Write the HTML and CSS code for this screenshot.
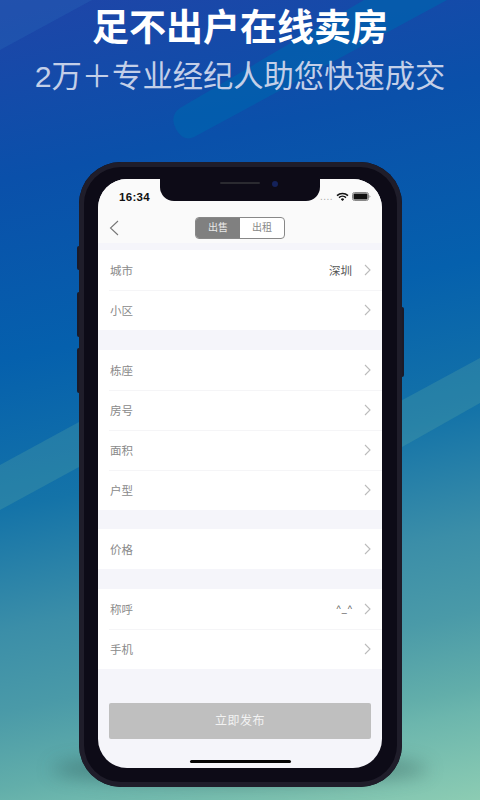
FILE: index.html
```html
<!DOCTYPE html>
<html lang="zh-CN">
<head>
    <meta charset="UTF-8">
    <title>足不出户在线卖房</title>
    <link rel="stylesheet" href="styles.css">
</head>
<body>
    <div class="poster">
        <svg class="bands" width="480" height="800" viewBox="0 0 480 800">
            <polygon points="0,50 92,0 0,0" fill="#2a6cb8" opacity="0.3"/>
            <path d="M180 108 L364 0 L447 0 L194 137 Q183 142 176 129 Q169 116 180 108 Z" fill="#0063ae" opacity="0.7"/>
            <polygon points="0,465 90,416 90,461 0,510" fill="#63b0a4" opacity="0.25"/>
            <polygon points="395,404 480,358 480,403 395,451" fill="#63b0a4" opacity="0.25"/>
        </svg>
        <div class="ground"></div>
        <h1 class="title">足不出户在线卖房</h1>
        <p class="subtitle">2万＋专业经纪人助您快速成交</p>

        <div class="phone">
            <span class="side-btn btn-mute"></span>
            <span class="side-btn btn-up"></span>
            <span class="side-btn btn-down"></span>
            <span class="side-btn btn-power"></span>
            <div class="screen">
                <div class="notch">
                    <span class="speaker"></span>
                    <span class="camera"></span>
                </div>
                <div class="status-bar">
                    <span class="time">16:34</span>
                    <div class="status-icons">
                        <span class="signal">....</span>
                        <svg width="13" height="10" viewBox="0 0 13 10">
                            <path d="M1 3.6 A8 8 0 0 1 12 3.6 M3 5.6 A5 5 0 0 1 10 5.6" fill="none" stroke="#111" stroke-width="1.5"/>
                            <path d="M4.8 7.2 A2.4 2.4 0 0 1 8.2 7.2 L6.5 9 Z" fill="#111"/>
                        </svg>
                        <svg width="19" height="9" viewBox="0 0 19 9">
                            <rect x="0.5" y="0.5" width="16" height="8" rx="2" fill="none" stroke="#888"/>
                            <rect x="1.5" y="1.5" width="14" height="6" rx="1" fill="#111"/>
                            <path d="M17.5 3 L18.5 4.5 L17.5 6 Z" fill="#888"/>
                        </svg>
                    </div>
                </div>
                <div class="nav-bar">
                    <svg class="back" width="10" height="16" viewBox="0 0 10 16">
                        <path d="M9 1 L1.5 8 L9 15" fill="none" stroke="#777" stroke-width="1.1"/>
                    </svg>
                    <div class="segment">
                        <span class="segment-item active">出售</span>
                        <span class="segment-item">出租</span>
                    </div>
                </div>

                <div class="group first">
                    <div class="row"><span class="label">城市</span><span class="value">深圳</span><svg class="arrow" width="7" height="12" viewBox="0 0 7 12"><path d="M1 1 L6 6 L1 11"/></svg></div>
                    <div class="row"><span class="label">小区</span><svg class="arrow" width="7" height="12" viewBox="0 0 7 12"><path d="M1 1 L6 6 L1 11"/></svg></div>
                </div>
                <div class="group">
                    <div class="row"><span class="label">栋座</span><svg class="arrow" width="7" height="12" viewBox="0 0 7 12"><path d="M1 1 L6 6 L1 11"/></svg></div>
                    <div class="row"><span class="label">房号</span><svg class="arrow" width="7" height="12" viewBox="0 0 7 12"><path d="M1 1 L6 6 L1 11"/></svg></div>
                    <div class="row"><span class="label">面积</span><svg class="arrow" width="7" height="12" viewBox="0 0 7 12"><path d="M1 1 L6 6 L1 11"/></svg></div>
                    <div class="row"><span class="label">户型</span><svg class="arrow" width="7" height="12" viewBox="0 0 7 12"><path d="M1 1 L6 6 L1 11"/></svg></div>
                </div>
                <div class="group tight">
                    <div class="row"><span class="label">价格</span><svg class="arrow" width="7" height="12" viewBox="0 0 7 12"><path d="M1 1 L6 6 L1 11"/></svg></div>
                </div>
                <div class="group">
                    <div class="row"><span class="label">称呼</span><span class="value small">^_^</span><svg class="arrow" width="7" height="12" viewBox="0 0 7 12"><path d="M1 1 L6 6 L1 11"/></svg></div>
                    <div class="row"><span class="label">手机</span><svg class="arrow" width="7" height="12" viewBox="0 0 7 12"><path d="M1 1 L6 6 L1 11"/></svg></div>
                </div>

                <div class="submit">立即发布</div>
                <div class="home-bar"></div>
            </div>
        </div>
    </div>
</body>
</html>
```

FILE: styles.css
```css
* {
    box-sizing: border-box;
}
body {
    margin: 0;
    padding: 0;
    overflow: hidden;
    font-family: "Liberation Sans", "Noto Sans CJK SC", sans-serif;
}
.poster {
    width: 480px;
    height: 800px;
    position: relative;
    overflow: hidden;
    padding-top: 7px;
    background: linear-gradient(168deg, #1f45a8 0%, #0a50aa 20%, #0560ad 40%, #1473a8 56.5%, #3b8ea8 70%, #4a9aa8 79%, #62aeaa 87.5%, #6cb6ad 90%, #8cccb3 100%);
}
.bands {
    position: absolute;
    left: 0;
    top: 0;
}
.ground {
    position: absolute;
    left: 52px;
    top: 754px;
    width: 376px;
    height: 30px;
    border-radius: 50%;
    background: rgba(30, 60, 60, 0.35);
    filter: blur(9px);
}
.title {
    position: relative;
    margin: 0;
    height: 44px;
    line-height: 44px;
    font-size: 37px;
    font-weight: 700;
    color: #fff;
    text-align: center;
}
.subtitle {
    position: relative;
    margin: 6px 0 0;
    height: 40px;
    line-height: 40px;
    font-size: 30.3px;
    color: #c3cfe8;
    text-align: center;
}
.phone {
    position: relative;
    width: 323px;
    height: 625px;
    margin: 65px 0 0 79px;
    padding: 17px 20px 18px 19px;
    border-radius: 42px;
    background: #0d0b17;
    box-shadow: inset 0 0 0 5px #1f1d2a;
}
.side-btn {
    position: absolute;
    left: -2px;
    width: 2px;
    background: #1b1a28;
    border-radius: 2px 0 0 2px;
}
.btn-mute {
    top: 84px;
    height: 24px;
}
.btn-up {
    top: 130px;
    height: 45px;
}
.btn-down {
    top: 186px;
    height: 45px;
}
.btn-power {
    left: auto;
    right: -2px;
    top: 145px;
    height: 70px;
    border-radius: 0 2px 2px 0;
}
.screen {
    position: relative;
    height: 589px;
    border-radius: 29px;
    overflow: hidden;
    background: #f5f5fa;
}
.notch {
    position: absolute;
    left: 62px;
    top: 0;
    width: 160px;
    height: 22px;
    border-radius: 0 0 14px 14px;
    background: #0d0b17;
}
.speaker {
    position: absolute;
    left: 60px;
    top: 3px;
    width: 40px;
    height: 2px;
    border-radius: 1px;
    background: #2a2a30;
}
.camera {
    position: absolute;
    left: 112px;
    top: 2px;
    width: 6px;
    height: 6px;
    border-radius: 50%;
    background: #14225a;
}
.status-bar {
    height: 30px;
    padding: 5px 11px 0 21px;
    display: flex;
    justify-content: space-between;
    align-items: center;
    background: #fafafa;
}
.time {
    font-size: 11.5px;
    font-weight: 700;
    color: #111;
    letter-spacing: 0.3px;
}
.status-icons {
    display: flex;
    align-items: center;
    gap: 3px;
}
.signal {
    font-size: 10px;
    color: #aaa;
    letter-spacing: 0.5px;
}
.nav-bar {
    height: 34px;
    position: relative;
    display: flex;
    justify-content: center;
    align-items: center;
    padding-top: 3px;
    background: #fafafa;
}
.back {
    position: absolute;
    left: 11px;
    top: 11px;
}
.segment {
    display: flex;
    width: 90px;
    height: 22px;
    border: 1px solid #888;
    border-radius: 4px;
    overflow: hidden;
    background: #fff;
}
.segment-item {
    flex: 1;
    line-height: 20px;
    text-align: center;
    font-size: 10px;
    color: #888;
}
.segment-item.active {
    background: #808080;
    color: #e8e8e8;
}
.group {
    margin-top: 20px;
    background: #fff;
}
.group.first {
    margin-top: 7px;
}
.group.tight {
    margin-top: 19px;
}
.row {
    height: 40px;
    display: flex;
    align-items: center;
    padding: 0 11px 0 12px;
    position: relative;
}
.row + .row::before {
    content: "";
    position: absolute;
    left: 11px;
    right: 0;
    top: 0;
    height: 1px;
    background: #f5f5f7;
}
.label {
    flex: 1;
    font-size: 11.5px;
    color: #8a8a8a;
}
.value {
    font-size: 11.5px;
    color: #555;
    margin-right: 12px;
}
.value.small {
    font-size: 9px;
    letter-spacing: 1px;
    margin-right: 11px;
}
.arrow path {
    fill: none;
    stroke: #bbb;
    stroke-width: 1.1;
}
.submit {
    margin: 34px 11px 0;
    height: 36px;
    line-height: 36px;
    border-radius: 2px;
    background: #bfbfbf;
    color: #f2f2f2;
    font-size: 12px;
    text-align: center;
    letter-spacing: 0.5px;
}
.home-bar {
    position: absolute;
    left: 92px;
    bottom: 5px;
    width: 101px;
    height: 3px;
    border-radius: 2px;
    background: #050505;
}
```
